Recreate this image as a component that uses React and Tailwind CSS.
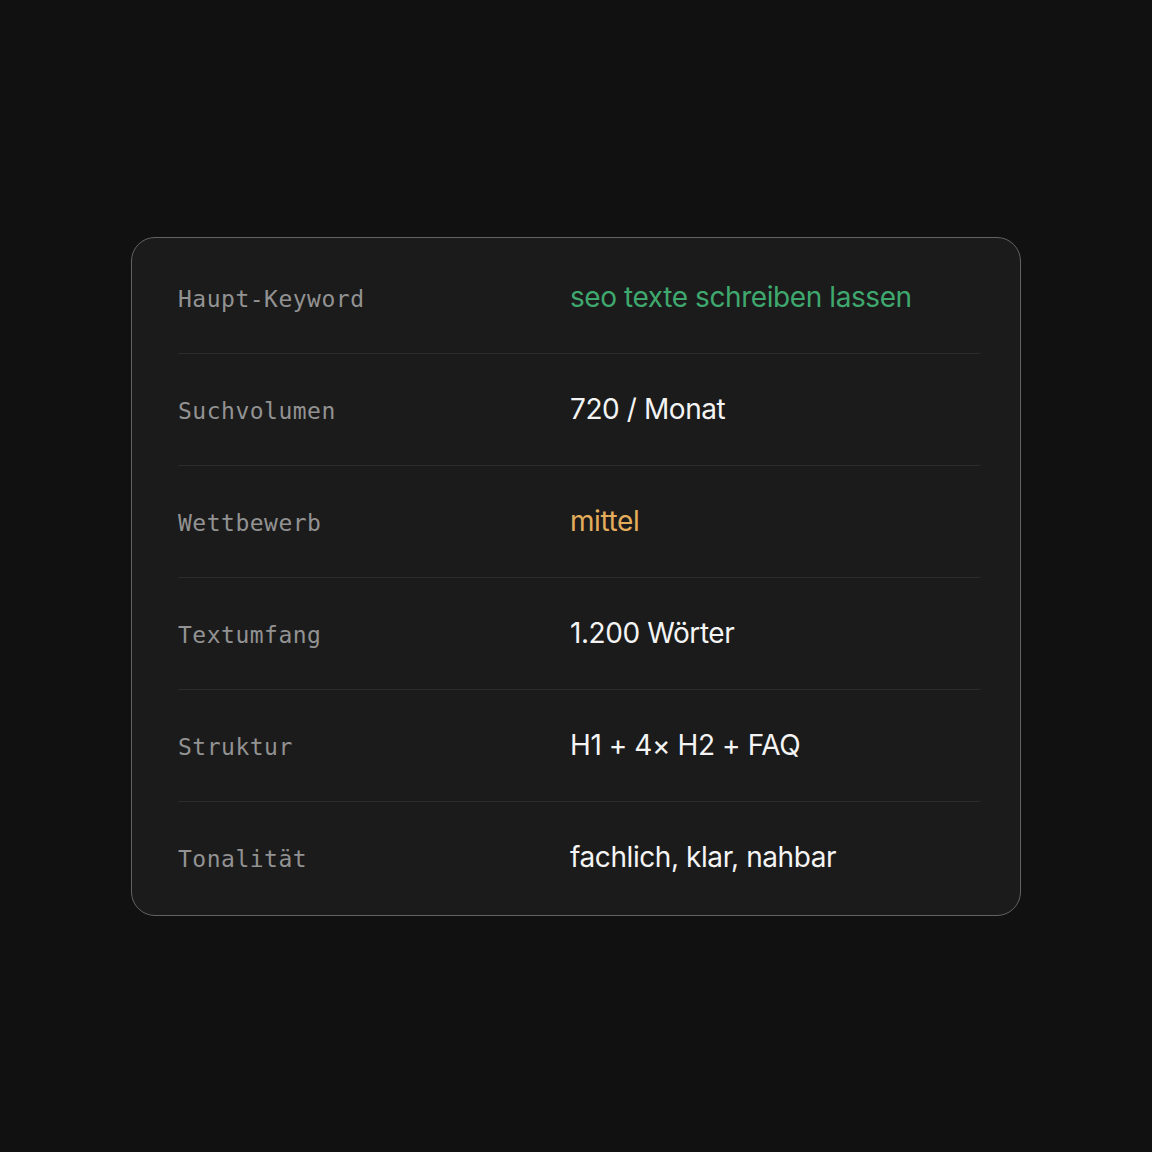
const rows = [
  { label: "Haupt-Keyword", value: "seo texte schreiben lassen", color: "text-[#3fa86e]" },
  { label: "Suchvolumen", value: "720 / Monat", color: "text-[#f4f4f4]" },
  { label: "Wettbewerb", value: "mittel", color: "text-[#e3ad5c]" },
  { label: "Textumfang", value: "1.200 Wörter", color: "text-[#f4f4f4]" },
  { label: "Struktur", value: "H1 + 4× H2 + FAQ", color: "text-[#f4f4f4]" },
  { label: "Tonalität", value: "fachlich, klar, nahbar", color: "text-[#f4f4f4]" },
];

export default function App() {
  return (
    <div className="min-h-[1152px] w-full bg-[#111111] flex items-center justify-center">
      <div className="w-[890px] rounded-[24px] border border-[#626262] bg-[#1b1b1b] pl-[46px] pr-[40px] pt-[4px] pb-[2px]">
        {rows.map((r, i) => (
          <div
            key={r.label}
            className={`flex items-center ${i < rows.length - 1 ? "h-[112px] border-b border-[#2c2c2c]" : "h-[111px]"}`}
          >
            <div className="flex items-baseline">
              <div className="w-[392px] shrink-0 font-['DejaVu_Sans_Mono',monospace] text-[23px] tracking-[0.5px] text-[#929292]">
                {r.label}
              </div>
              <div className={`font-['Inter',sans-serif] text-[28px] tracking-[-0.015em] ${r.color}`}>
                {r.value}
              </div>
            </div>
          </div>
        ))}
      </div>
    </div>
  );
}
